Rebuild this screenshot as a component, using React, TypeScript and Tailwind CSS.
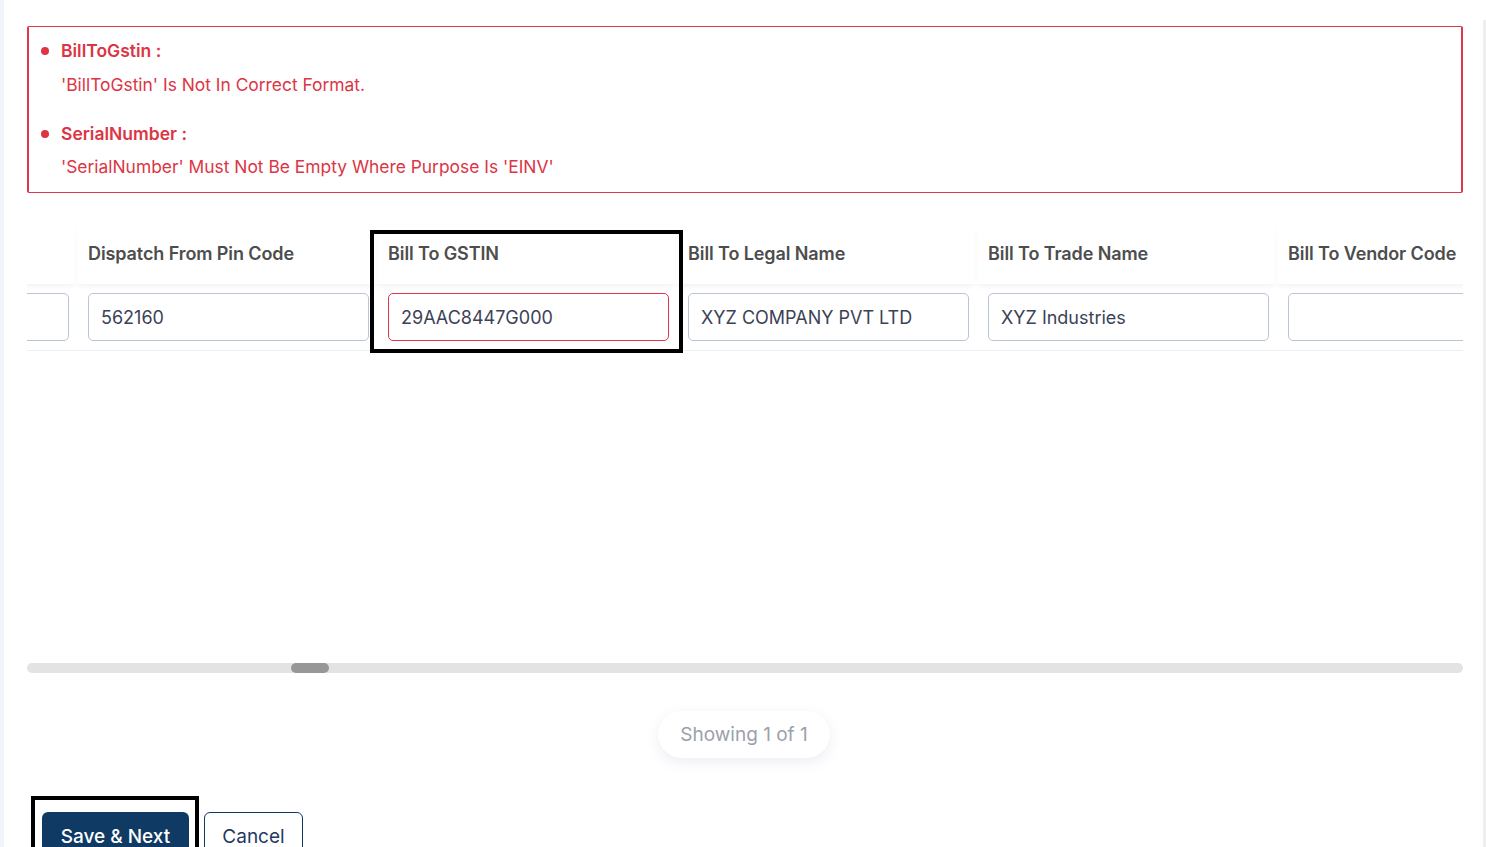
import React from "react";

const cols = [
  { h: "Dispatch From Place", v: "BENGALURU" },
  { h: "Dispatch From Pin Code", v: "562160" },
  { h: "Bill To GSTIN", v: "29AAC8447G000", err: true },
  { h: "Bill To Legal Name", v: "XYZ COMPANY PVT LTD" },
  { h: "Bill To Trade Name", v: "XYZ Industries" },
  { h: "Bill To Vendor Code", v: "" },
  { h: "Bill To Address 1", v: "" },
];

export default function App() {
  return (
    <div
      className="relative w-[1486px] h-[847px] overflow-hidden bg-white flex"
      style={{ fontFamily: "Inter, 'Open Sans', sans-serif" }}
    >
      <div className="w-[4px] bg-[#f1f4f8] shrink-0" />
      <div className="flex-1 min-w-0 flex flex-col pl-[23px] pr-[20px]">
        {/* error box */}
        <div className="shrink-0 mt-[26px] h-[167px] border border-[#e0354a] border-l-2 border-r-[2px] rounded-[2px] pl-[12px] pt-[14px] text-[#dc3545]">
          <div className="flex items-center h-[20px]">
            <span className="w-[8px] h-[8px] rounded-full bg-[#dc3545] mr-[12px]" />
            <span className="text-[17.5px] font-semibold">BillToGstin :</span>
          </div>
          <div className="h-[20px] mt-[14px] pl-[20px] text-[17.4px] flex items-center">'BillToGstin' Is Not In Correct Format.</div>
          <div className="flex items-center h-[20px] mt-[29px]">
            <span className="w-[8px] h-[8px] rounded-full bg-[#dc3545] mr-[12px]" />
            <span className="text-[17.5px] font-semibold">SerialNumber :</span>
          </div>
          <div className="h-[20px] mt-[13px] pl-[20px] text-[17.4px] flex items-center">'SerialNumber' Must Not Be Empty Where Purpose Is 'EINV'</div>
        </div>

        {/* table */}
        <div className="shrink-0 mt-[30px] h-[432px] overflow-hidden">
          <div className="ml-[-251px] flex flex-col w-max">
            <div className="flex h-[61px]">
              {cols.map((c, i) => (
                <div
                  key={i}
                  className="w-[300px] pl-[12px] flex items-center text-[18px] font-semibold text-[#4d4d4d] shadow-[0_4px_6px_-2px_rgba(0,0,0,0.06)]"
                >
                  <span className="tracking-[-0.1px]">{c.h}</span>
                </div>
              ))}
            </div>
            <div className="flex border-b border-[#eef0f3] pt-[9px] pb-[9px]">
              {cols.map((c, i) => (
                <div key={i} className="w-[300px] pl-[12px] pr-[7px]">
                  <div
                    className={`h-[48px] rounded-[5px] border px-[12px] flex items-center text-[18px] text-[#3b4256] ${
                      c.err ? "border-[#e0354a]" : "border-[#b9c3da]"
                    }`}
                  >
                    {c.v}
                  </div>
                </div>
              ))}
            </div>
          </div>
        </div>

        {/* scrollbar */}
        <div className="shrink-0 mt-[8px] h-[10px] rounded-full bg-[#e3e3e3] relative">
          <div className="absolute left-[264px] top-0 h-[10px] w-[38px] rounded-full bg-[#979797]" />
        </div>

        {/* pager */}
        <div className="shrink-0 flex justify-center mt-[38px]">
          <div className="h-[47px] w-[172px] rounded-full bg-white shadow-[0_4px_14px_rgba(120,130,180,0.14)] flex items-center justify-center text-[19px] text-[#9ca0ac] ml-[-2px] pt-[1px]">
            Showing 1 of 1
          </div>
        </div>

        {/* buttons */}
        <div className="shrink-0 flex mt-[54px] pl-[15px] gap-[15px]">
          <button className="h-[50px] w-[147px] rounded-[6px] bg-[#0f3a63] text-white text-[19px] font-medium">
            Save &amp; Next
          </button>
          <button className="h-[50px] w-[99px] rounded-[6px] border border-[#0f3a63] text-[#1f3a5f] text-[19px]">
            Cancel
          </button>
        </div>
      </div>
      <div className="w-[3px] mt-[20px] bg-[#eeeeee] shrink-0" />

      {/* annotation boxes */}
      <div className="absolute left-[370px] top-[230px] w-[313px] h-[123px] border-[4px] border-black pointer-events-none" />
      <div className="absolute left-[31px] top-[796px] w-[168px] h-[70px] border-[4px] border-black pointer-events-none" />
    </div>
  );
}
